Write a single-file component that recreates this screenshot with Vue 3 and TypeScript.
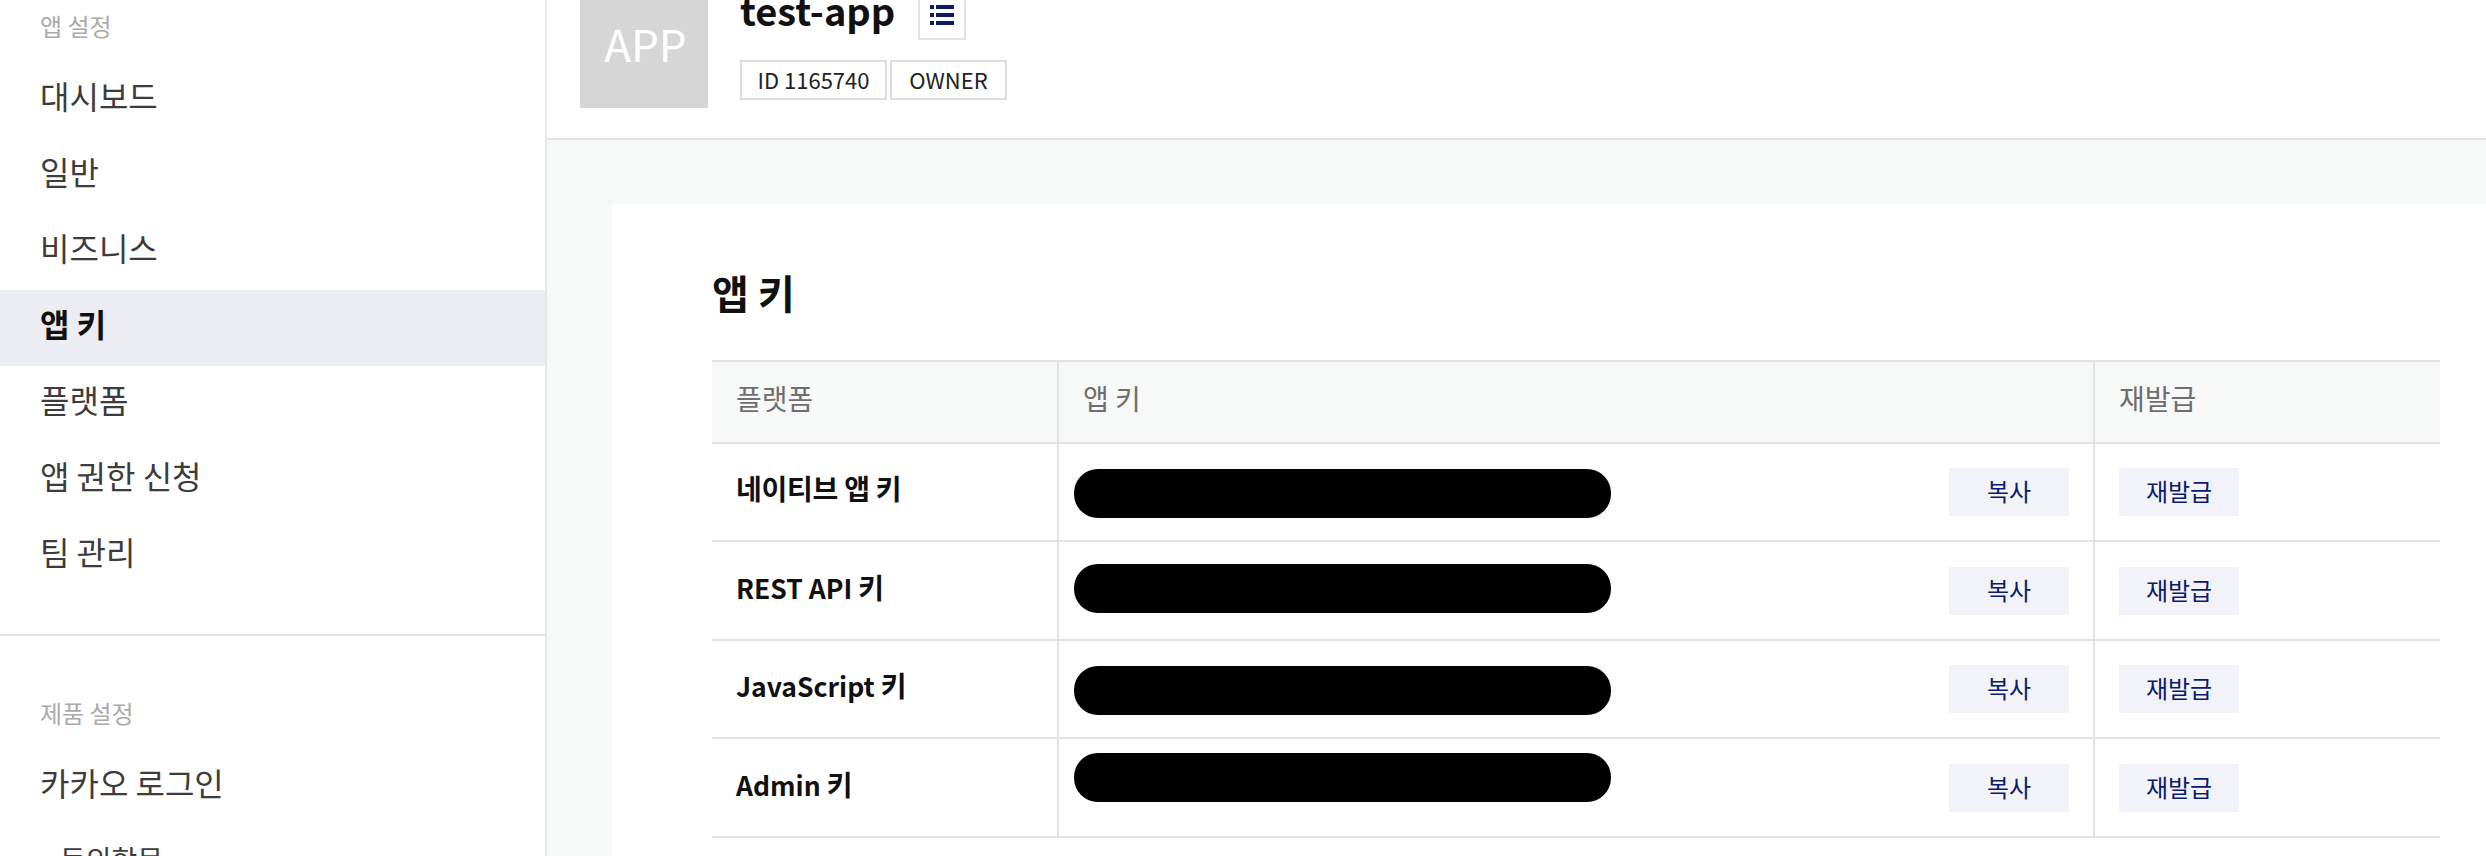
<script setup lang="ts">
const appNav = ['대시보드', '일반', '비즈니스', '앱 키', '플랫폼', '앱 권한 신청', '팀 관리']
const rows = [
  { latin: '', name: '네이티브 앱 키', cls: 'r1' },
  { latin: 'REST API ', name: '키', cls: 'r2' },
  { latin: 'JavaScript ', name: '키', cls: 'r3' },
  { latin: 'Admin ', name: '키', cls: 'r4' },
]
</script>

<template>
  <div class="page">
    <aside class="side">
      <div class="group first">
        <div class="label">앱 설정</div>
        <a v-for="n in appNav" :key="n" class="item" :class="{ on: n === '앱 키' }">{{ n }}</a>
      </div>
      <div class="group second">
        <div class="label">제품 설정</div>
        <a class="item">카카오 로그인</a>
        <a class="sub">동의항목</a>
      </div>
    </aside>
    <main class="main">
      <header class="head">
        <div class="logo">APP</div>
        <div class="info">
          <div class="title-row">
            <h1>test-app</h1>
            <button class="list-btn" aria-label="목록">
              <svg width="24" height="20" viewBox="0 0 24 20"><path fill="#0b1a6b" d="M0 0h4v4H0zM6 0h18v4H6zM0 8h4v4H0zM6 8h18v4H6zM0 16h4v4H0zM6 16h18v4H6z"/></svg>
            </button>
          </div>
          <div class="tags"><span class="tag t1">ID 1165740</span><span class="tag t2">OWNER</span></div>
        </div>
      </header>
      <section class="content">
        <div class="card">
          <h2>앱 키</h2>
          <table>
            <thead>
              <tr><th class="c1">플랫폼</th><th class="c2">앱 키</th><th class="c3">재발급</th></tr>
            </thead>
            <tbody>
              <tr v-for="r in rows" :key="r.name + r.latin" :class="r.cls">
                <td class="c1 name"><span class="latin">{{ r.latin }}</span>{{ r.name }}</td>
                <td class="c2"><div class="keycell"><span class="pill"></span><button class="btn">복사</button></div></td>
                <td class="c3"><button class="btn">재발급</button></td>
              </tr>
            </tbody>
          </table>
        </div>
      </section>
    </main>
  </div>
</template>

<style>
html, body { margin: 0; background: #fff; overflow: hidden; }
</style>

<style scoped>
.page {
  display: flex;
  height: 856px;
  overflow: hidden;
  font-family: "Noto Sans CJK KR", "Noto Sans", sans-serif;
  color: #111;
}
.side {
  width: 545px;
  flex: none;
  border-right: 2px solid #e8e8e8;
  overflow: hidden;
}
.group.first { padding-top: 9px; padding-bottom: 40px; border-bottom: 2px solid #e2e2e2; }
.group.second { padding-top: 60px; }
.label { padding-left: 40px; font-size: 24px; line-height: 34px; color: #aaa; margin-bottom: 19px; }
.item {
  display: block;
  height: 76px;
  line-height: 67px;
  padding-left: 40px;
  font-size: 32px;
  color: #3c3c3c;
}
.item.on { background: #ecedf2; color: #111; font-weight: 700; }
.sub { display: block; padding-left: 60px; padding-top: 9px; font-size: 28px; line-height: 50px; color: #3c3c3c; }
.main { flex: 1; min-width: 0; background: #f7f8f8; }
.head {
  height: 138px;
  background: #fff;
  border-bottom: 2px solid #e2e2e2;
  display: flex;
  padding-left: 33px;
  gap: 32px;
  overflow: hidden;
}
.logo {
  width: 128px;
  height: 108px;
  box-sizing: border-box;
  padding-left: 3px;
  background: #d6d6d6;
  color: #fff;
  font-size: 44px;
  text-align: center;
  line-height: 86px;
}
.title-row { display: flex; height: 40px; margin-bottom: 20px; align-items: flex-start; }
h1 { margin: 0; font-size: 38px; font-weight: 700; line-height: 20px; color: #111; }
.list-btn {
  width: 48px;
  height: 40px;
  margin-left: 23px;
  border: 2px solid #e2e2e2;
  border-top: none;
  background: #fff;
  padding: 0 0 8px;
  display: flex;
  align-items: center;
  justify-content: center;
}
.tags { display: flex; gap: 3px; }
.tag {
  height: 40px;
  box-sizing: border-box;
  border: 2px solid #ddd;
  text-align: center;
  font-size: 22px;
  line-height: 34px;
  color: #222;
}
.t1 { width: 147px; }
.t2 { width: 117px; }
.content { padding: 64px 0 0 65px; }
.card { background: #fff; padding: 60px 46px 0 100px; height: 700px; box-sizing: border-box; }
h2 { margin: 0 0 38px; font-size: 40px; line-height: 56px; padding-bottom: 2px; font-weight: 700; }
table { width: 1728px; border-collapse: collapse; table-layout: fixed; }
th, td { box-sizing: border-box; }
th {
  height: 82px;
  background: #f7f8f8;
  border-top: 2px solid #e2e2e2;
  border-bottom: 2px solid #e2e2e2;
  text-align: left;
  font-size: 28px;
  font-weight: 400;
  color: #6e6e6e;
  padding: 0 24px 8px;
}
td { height: 98px; border-bottom: 2px solid #e2e2e2; padding: 0; }
.r2 td, .r4 td { height: 99px; }
.c1 { width: 346px; }
.c2 { width: 1036px; border-left: 2px solid #e2e2e2; }
.c3 { border-left: 2px solid #e2e2e2; }
td.c3 { padding-left: 24px; }
td.name { font-size: 28px; font-weight: 700; padding: 0 0 8px 24px; color: #111; letter-spacing: -0.25px; }
.latin { font-size: 26.5px; letter-spacing: 0; }
.keycell { display: flex; align-items: center; justify-content: space-between; padding: 0 24px 0 15px; }
.pill { width: 537px; height: 49px; border-radius: 24px; background: #000; }
.r1 .pill, .r3 .pill { margin-top: 3px; }
.r2 .pill { margin-bottom: 4px; }
.r4 .pill { margin-bottom: 20px; }
.btn {
  width: 120px;
  height: 48px;
  border: none;
  background: #f2f3f9;
  color: #0b1a6b;
  font-family: inherit;
  font-size: 24px;
  padding: 0 0 3px;
  display: block;
}
</style>
